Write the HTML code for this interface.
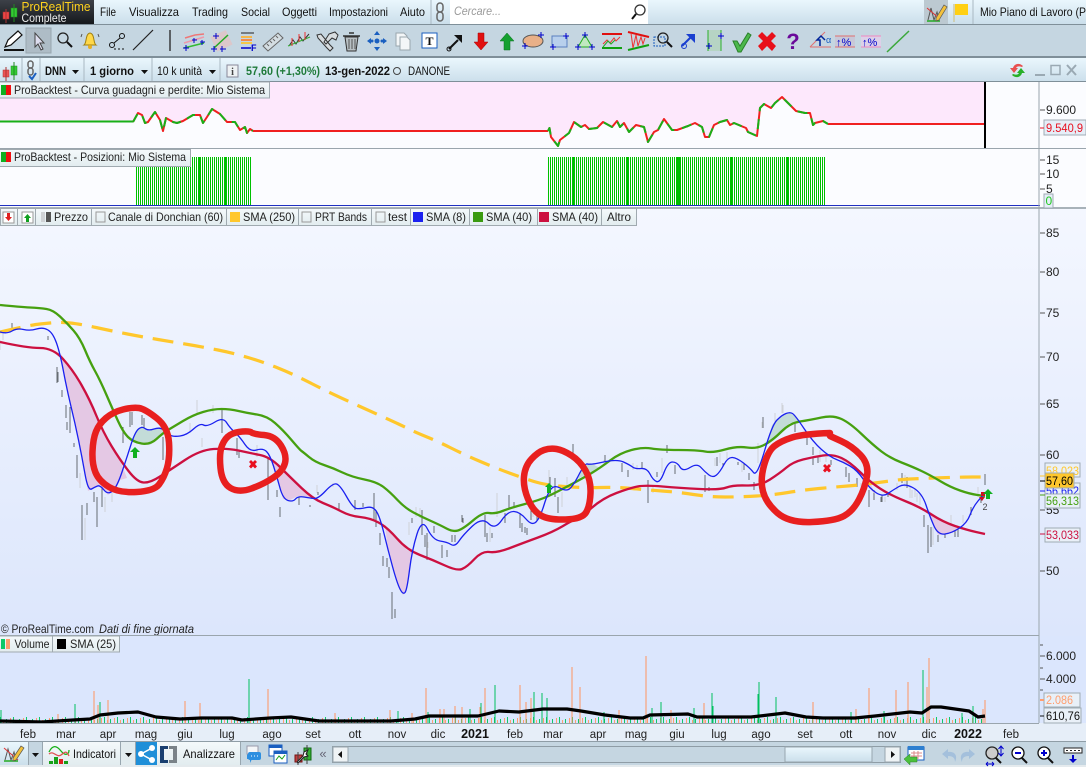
<!DOCTYPE html>
<html lang="it"><head><meta charset="utf-8"><title>ProRealTime</title>
<style>
html,body{margin:0;padding:0;background:#c5d6e1}
svg{display:block}
text{font-family:"Liberation Sans",sans-serif;font-size:12px;fill:#111}
.t{text-anchor:middle;fill:#222;font-size:11.5px}
.ax{font-size:12px;fill:#222}
.lg{font-size:12px;fill:#222}
.v{shape-rendering:crispEdges}
</style></head><body>
<svg width="1086" height="767" viewBox="0 0 1086 767" xmlns="http://www.w3.org/2000/svg">
<defs>
<linearGradient id="bar" x1="0" y1="0" x2="0" y2="1"><stop offset="0" stop-color="#eaf7fd"/><stop offset="1" stop-color="#cbdfeb"/></linearGradient>
<linearGradient id="main" x1="0" y1="0" x2="0" y2="1"><stop offset="0" stop-color="#f4f7ff"/><stop offset="1" stop-color="#dce6fc"/></linearGradient>
<linearGradient id="logo" x1="0" y1="0" x2="0" y2="1"><stop offset="0" stop-color="#3d4148"/><stop offset="1" stop-color="#15181c"/></linearGradient>
<linearGradient id="btn" x1="0" y1="0" x2="0" y2="1"><stop offset="0" stop-color="#f4f9fb"/><stop offset="1" stop-color="#e2ecef"/></linearGradient>
<pattern id="pos" width="2" height="10" patternUnits="userSpaceOnUse"><rect width="1" height="10" fill="#00c000"/></pattern>
<pattern id="vg" width="13" height="7" patternUnits="userSpaceOnUse" patternTransform="translate(0 716)"><rect x="0" y="1" width="1" height="6" fill="#10c868"/><rect x="3" y="4" width="1" height="3" fill="#ff9e6e"/><rect x="6" y="3" width="1" height="4" fill="#10c868"/><rect x="10" y="2" width="1" height="5" fill="#ff9e6e"/></pattern>
</defs>

<!-- background -->
<rect width="1086" height="767" fill="#c5d6e1"/>
<!-- menu bar -->
<rect width="1086" height="24" fill="url(#bar)"/>
<rect y="24" width="1086" height="1" fill="#7f8f99"/>
<rect width="94" height="24" fill="url(#logo)"/>
<rect x="3" y="12" width="6" height="7" fill="#e44" stroke="#a33" stroke-width=".5"/><path d="M6 9v14" stroke="#a33"/>
<rect x="11" y="8" width="6" height="9" fill="#3c3" stroke="#282" stroke-width=".5"/><path d="M14 4v18" stroke="#282"/>
<text x="21.500" y="11" style="font-size:13px;fill:#ffd21e" textLength="69" lengthAdjust="spacingAndGlyphs">ProRealTime</text>
<text x="21.500" y="22" style="font-size:12px;fill:#eee" textLength="45" lengthAdjust="spacingAndGlyphs">Complete</text>
<text x="100" y="16" textLength="16" lengthAdjust="spacingAndGlyphs">File</text><text x="129" y="16" textLength="50" lengthAdjust="spacingAndGlyphs">Visualizza</text><text x="192" y="16" textLength="36" lengthAdjust="spacingAndGlyphs">Trading</text><text x="241" y="16" textLength="29" lengthAdjust="spacingAndGlyphs">Social</text><text x="282" y="16" textLength="35" lengthAdjust="spacingAndGlyphs">Oggetti</text><text x="329" y="16" textLength="59" lengthAdjust="spacingAndGlyphs">Impostazioni</text><text x="400" y="16" textLength="25" lengthAdjust="spacingAndGlyphs">Aiuto</text>
<path d="M431 0v24" stroke="#a9b8c2"/>
<g fill="none" stroke="#666" stroke-width="1.500"><rect x="437" y="3" width="6" height="9" rx="3"/><rect x="437" y="12" width="6" height="9" rx="3"/></g>
<rect x="450" y="0" width="198" height="24" fill="#fff"/>
<text x="454" y="15" style="font-style:italic;fill:#9a9a9a;font-size:12px" textLength="47" lengthAdjust="spacingAndGlyphs">Cercare...</text>
<circle cx="640" cy="10" r="5" fill="none" stroke="#333" stroke-width="1.300"/><path d="M636 14l-4 5" stroke="#111" stroke-width="2"/>
<rect x="924" y="0" width="24" height="24" fill="#bcc9d1"/>
<path d="M928 20l3-12 3 12 3-8 2 8" fill="none" stroke="#555"/><path d="M927 8l13 11" stroke="#d33"/><path d="M927 21h13" stroke="#2a2" stroke-width="1.500"/>
<path d="M936 18l8-13 3 2-8 13-3 1z" fill="#f3c13c" stroke="#555" stroke-width=".7"/>
<path d="M954 4v18" stroke="#cfc9a0" stroke-width="1.500"/><path d="M955 4h13v11h-13z" fill="#ffd014"/>
<path d="M973 0v24" stroke="#a9b8c2"/>
<text x="980" y="16" textLength="106" lengthAdjust="spacingAndGlyphs">Mio Piano di Lavoro (P</text>

<!-- toolbar -->
<rect y="25" width="1086" height="32" fill="#c5d6e1"/>
<rect y="56" width="1086" height="2" fill="#7f8f99"/>
<rect x="26" y="28" width="25" height="25" fill="#aebcc6" stroke="#98a6af"/>
<path d="M5 47l3-7 10-9 4 4-11 10z" fill="#fff" stroke="#111" stroke-width="1.200"/><path d="M4 50h20" stroke="#111" stroke-width="2"/>
<path d="M35 33v14l3-3 3 6 2-1-3-6h4z" fill="#dde" stroke="#444"/>
<circle cx="63" cy="38" r="5" fill="none" stroke="#222" stroke-width="1.300"/><path d="M67 42l5 5" stroke="#111" stroke-width="2"/>
<path d="M84 45c3-2 1-11 6-12 5 1 3 10 6 12z" fill="#ffd84a" stroke="#a08010"/><circle cx="90" cy="47" r="2" fill="#e8b020"/><path d="M82 34l-1 3M98 34l1 3" stroke="#555"/>
<circle cx="112" cy="45" r="2.500" fill="none" stroke="#111"/><circle cx="122" cy="36" r="2.500" fill="none" stroke="#111"/><path d="M114 43l6-5" stroke="#111"/><path d="M114 49h12" stroke="#111" stroke-dasharray="2 2"/>
<path d="M133 50l20-20" stroke="#222" stroke-width="1.200"/>
<path d="M170 30v21" stroke="#222" stroke-width="1.300"/>
<g fill="none"><path d="M185 38l10-3 9-1" stroke="#e77" stroke-width="1.500"/><path d="M184 43l20-6" stroke="#e9a" stroke-width="1.500"/><path d="M184 48l20-5" stroke="#3b3" stroke-width="1.500"/><path d="M183 48h6M186 45v6M192 40h5M194 38v5M200 42h5M202 40v5" stroke="#00c"/></g>
<g fill="none"><rect x="213" y="33" width="17" height="16" fill="#e6c0c0" opacity=".7" transform="rotate(-25 221 41)"/><path d="M214 48l14-13" stroke="#2a2" stroke-width="1.500"/><path d="M213 36h6M216 33v6M211 49h6M214 46v6M220 49h6M222 46v6" stroke="#00c"/></g>
<g><path d="M241 33h13" stroke="#222"/><rect x="241" y="36" width="11" height="2" fill="#f4b64a"/><rect x="241" y="39" width="11" height="2" fill="#f48a4a"/><rect x="241" y="42" width="11" height="2" fill="#f4c84a"/><path d="M241 48h10" stroke="#00c" stroke-width="1.500"/><text x="251" y="51" style="font-size:9px;font-weight:bold;fill:#00c">F</text></g>
<path d="M263 46l15-13 5 5-15 13z" fill="#d4dde2" stroke="#666"/><path d="M267 44l2 2M270 41l2 2M273 39l2 2M276 36l2 2" stroke="#666"/>
<path d="M289 46l4-6 3 4 4-7 3 4 6-7" fill="none" stroke="#333"/><path d="M288 46l22-9" stroke="#3a3"/><path d="M292 38v8M299 34v8M305 32v8" stroke="#e33"/>
<path d="M317 35l4-1 9 11 3 3-3 3-3-3-9-10zM329 34l6-2 3 3-2 5-4-2-6 6-2-2z" fill="#d8dde0" stroke="#333"/>
<path d="M345 37h13l-2 14h-9z" fill="#b8c0c4" stroke="#333"/><path d="M343 36h17M349 33h5" stroke="#333" stroke-width="1.500"/><path d="M349 39v10M352 39v10M355 39v10" stroke="#555"/>
<g fill="#1a5fc0"><path d="M377 31l3 4h-6zM377 51l3-4h-6zM367 41l4-3v6zM387 41l-4-3v6z"/><circle cx="377" cy="41" r="2.500"/><circle cx="372" cy="41" r="1.500"/><circle cx="382" cy="41" r="1.500"/></g>
<g fill="#f3f6f8" stroke="#99a5ad"><path d="M396 33h8l3 3v10h-11z"/><path d="M400 37h7l3 3v10h-10z"/></g>
<rect x="422" y="33" width="15" height="15" fill="#fff" stroke="#1a5fc0"/><text x="429.500" y="45" style="font:bold 12px 'Liberation Serif',serif;text-anchor:middle;fill:#111">T</text>
<path d="M449 49l9-9" stroke="#111" stroke-width="2"/><circle cx="449" cy="49" r="2" fill="none" stroke="#111"/><path d="M454 35h8v8z" fill="#111"/>
<path d="M478 33h6v9h4l-7 8-7-8h4z" fill="#e01010" stroke="#a00" stroke-width=".5"/>
<path d="M504 50h6v-9h4l-7-8-7 8h4z" fill="#15a030" stroke="#0a7020" stroke-width=".5"/>
<ellipse cx="533" cy="41" rx="10" ry="6" fill="#e8b088" stroke="#555"/><path d="M538 35h6M541 32v6M522 46h6M525 43v6" stroke="#00c"/>
<rect x="552" y="36" width="15" height="11" fill="#b8d0ec" stroke="#5a80c0"/><path d="M550 47h6M553 44v6M563 36h6M566 33v6" stroke="#00c"/>
<path d="M585 35l7 12h-14z" fill="#c0e8c0" stroke="#2a2"/><path d="M582 35h6M585 32v6M575 47h6M578 44v6M589 47h6M592 44v6" stroke="#00c"/>
<path d="M602 34h20" stroke="#e01010" stroke-width="2"/><path d="M602 48h20" stroke="#10a010" stroke-width="2"/><path d="M603 44l4-4 3 3 4-5 2 3 4-4" fill="none" stroke="#e33"/><path d="M603 47l5-6 3 3 4-4" fill="none" stroke="#2a2"/>
<path d="M628 32l21 5" stroke="#e01010" stroke-width="2"/><path d="M628 50l21-5" stroke="#10a010" stroke-width="2"/><path d="M631 33l2 15 3-13 2 11 3-9 2 7 2-6" fill="none" stroke="#e33"/>
<rect x="654" y="37" width="11" height="9" fill="none" stroke="#1a5fc0" stroke-dasharray="2 1"/><circle cx="663" cy="38" r="5" fill="none" stroke="#222" stroke-width="1.300"/><path d="M667 42l5 5" stroke="#111" stroke-width="2"/>
<path d="M682 46l9-9" stroke="#1a3fd0" stroke-width="2"/><circle cx="684" cy="46" r="2.500" fill="none" stroke="#1a3fd0"/><path d="M686 34h9v9z" fill="#1a3fd0"/>
<rect x="708" y="30" width="13" height="21" fill="#b6d4c4"/><path d="M708 30v21M721 30v21" stroke="#2ab02a"/><path d="M706 46h6M709 43v6M718 36h6M721 33v6" stroke="#00c"/>
<path d="M733 41l4 0 3 5 8-13 3 2-10 17-3 0z" fill="#4cb84c" stroke="#2a802a"/>
<path d="M762 32l5 5 5-5 4 4-5 5 5 5-4 5-5-5-5 5-4-5 5-5-5-5z" fill="#e8101a"/>
<text x="793" y="49" style="font:bold 22px 'Liberation Sans',sans-serif;text-anchor:middle;fill:#6a0a9a">?</text>
<path d="M810 47l15-15M810 47h21" stroke="#e07070"/><path d="M820 46v-6h-3l4-4 4 4" fill="none" stroke="#00259a" stroke-width="1.500"/><text x="826" y="43" style="font-size:9px;fill:#1a5fc0">α</text>
<rect x="835" y="36" width="20" height="11" fill="#c8c8d8"/><path d="M835 36h20M835 47h20" stroke="#e07070"/><text x="836" y="46" style="font-size:11px;fill:#00c">↑%</text>
<rect x="861" y="36" width="20" height="11" fill="#dcd0e8"/><path d="M861 36h20M861 47h20" stroke="#f088c0"/><text x="862" y="46" style="font-size:11px;fill:#00c">↑%</text>
<path d="M887 52l22-21" stroke="#3ca83c" stroke-width="1.500"/>

<!-- instrument bar -->
<rect y="58" width="1086" height="24" fill="url(#bar)"/>
<rect y="81" width="1086" height="1" fill="#7f8f99"/>
<rect x="3" y="70" width="6" height="7" fill="#e55" stroke="#a33" stroke-width=".5"/><path d="M6 67v14" stroke="#a33"/><rect x="11" y="66" width="6" height="9" fill="#3c3" stroke="#282" stroke-width=".5"/><path d="M14 62v18" stroke="#282"/>
<path d="M22 58v23M40 58v23M84 58v23M152 58v23M220 58v23" stroke="#a9b8c2"/>
<g fill="none" stroke="#666" stroke-width="1.500"><rect x="28" y="61" width="5" height="7" rx="2.500"/><rect x="28" y="68" width="5" height="7" rx="2.500"/></g><path d="M29 76l3 3 4-6" fill="none" stroke="#1a5fc0" stroke-width="2"/>
<text x="45" y="75" style="font-weight:bold" textLength="21" lengthAdjust="spacingAndGlyphs">DNN</text><path d="M72 70h7l-3.500 4z" fill="#111"/>
<text x="90" y="75" style="font-weight:bold" textLength="44" lengthAdjust="spacingAndGlyphs">1 giorno</text><path d="M141 70h7l-3.500 4z" fill="#111"/>
<text x="157" y="75" textLength="45" lengthAdjust="spacingAndGlyphs">10 k unità</text><path d="M209 70h7l-3.500 4z" fill="#111"/>
<rect x="227" y="65" width="11" height="12" fill="#eef2f4" stroke="#889"/><text x="232.500" y="75" style="font:bold 10px 'Liberation Serif',serif;text-anchor:middle;fill:#444">i</text>
<text x="246" y="75" style="font-weight:bold;fill:#1f7a3a" textLength="74" lengthAdjust="spacingAndGlyphs">57,60 (+1,30%)</text>
<text x="325" y="75" style="font-weight:bold" textLength="65" lengthAdjust="spacingAndGlyphs">13-gen-2022</text>
<circle cx="397" cy="71" r="3.500" fill="none" stroke="#444"/>
<text x="408" y="75" textLength="42" lengthAdjust="spacingAndGlyphs">DANONE</text>
<path d="M1023 66c-4-4-9-2-10 2h-3l4 5 4-5h-2c1-2 3-2 6-1z" fill="#e85050"/><path d="M1012 75c4 4 9 2 10-2h3l-4-5-4 5h2c-1 2-3 2-6 1z" fill="#28b028"/>
<rect x="1035" y="74" width="10" height="2" fill="#9aa9b3"/><rect x="1051" y="65.500" width="9" height="9" fill="none" stroke="#9aa9b3" stroke-width="1.500"/><path d="M1067 65l9 10M1076 65l-9 10" stroke="#9aa9b3" stroke-width="2"/>

<!-- panel 1 -->
<rect y="82" width="1086" height="66" fill="#fbfcff"/>
<path d="M0 82H985V124H828L823 121L815 123L813 125L810 113L805 113L796 111L787 102L782 97L775 103L771 108L764 104L760 108L757 136L748 132L746 128L734 123L730 125L727 120L720 122L714 125L709 137L705 137L702 127L695 123L688 126L677 130L672 130L664 119L658 130L654 132L648 142L644 127L636 125L629 132L624 123L620 127L617 121L612 127L603 122L597 128L589 129L585 125L581 127L574 122L569 133L560 140L558 146L551 137L549.500 128L548 131H253L250 129L247 133L245 127L240 130L235 122L227 122L220 114L212 109L207 117L203 123L200 115L193 115L183 121L177 123L173 122L166 118L163 131L160 120L155 112L148 122L145 123L142 115L138 113L133 122H0Z" fill="#fde8fc"/>
<g fill="none" stroke-linejoin="round">
<path d="M0 121.500H133" stroke="#18b018" stroke-width="2"/>
<path d="M133 122L138 113L142 115L145 123L148 122L155 112L160 120L163 131L166 118L173 122L177 123L183 121L193 115L200 115L203 123L207 117L212 109L220 114L227 122L235 122L240 130L245 127L247 133L250 129L253 131" stroke="#f02020" stroke-width="2"/>
<path d="M133 122L138 113L142 115L145 123L148 122L155 112L160 120L163 131L166 118L173 122L177 123L183 121L193 115L200 115L203 123L207 117L212 109L220 114L227 122L235 122L240 130L245 127L247 133L250 129L253 131" stroke="#18b018" stroke-width="2" stroke-dasharray="9 7"/>
<path d="M253 131H548" stroke="#f02020" stroke-width="2"/>
<path d="M548 131L549.500 128L551 137L558 146L560 140L569 133L574 122L581 127L585 125L589 129L597 128L603 122L612 127L617 121L620 127L624 123L629 132L636 125L644 127L648 142L654 132L658 130L664 119L672 130L677 130L688 126L695 123L702 127L705 137L709 137L714 125L720 122L727 120L730 125L734 123L746 128L748 132L757 136L760 108L764 104L771 108L775 103L782 97L787 102L796 111L805 113L810 113L813 125L815 123L823 121L828 124" stroke="#f02020" stroke-width="2"/>
<path d="M548 131L549.500 128L551 137L558 146L560 140L569 133L574 122L581 127L585 125L589 129L597 128L603 122L612 127L617 121L620 127L624 123L629 132L636 125L644 127L648 142L654 132L658 130L664 119L672 130L677 130L688 126L695 123L702 127L705 137L709 137L714 125L720 122L727 120L730 125L734 123L746 128L748 132L757 136L760 108L764 104L771 108L775 103L782 97L787 102L796 111L805 113L810 113L813 125L815 123L823 121L828 124" stroke="#18b018" stroke-width="2" stroke-dasharray="10 8"/>
<path d="M828 124H985" stroke="#f02020" stroke-width="2"/>
</g>
<rect x="984" y="82" width="2" height="66" fill="#000"/>
<rect y="148" width="1086" height="1" fill="#9aa5ad"/>

<!-- panel 2 -->
<rect y="149" width="1086" height="60" fill="#fbfcff"/>
<rect x="135" y="157" width="117" height="48" fill="url(#pos)"/>
<rect x="548" y="157" width="278" height="48" fill="url(#pos)"/>
<g fill="#00c000"><rect x="198" y="157" width="3" height="48"/><rect x="224" y="157" width="2" height="48"/><rect x="573" y="157" width="2" height="48"/><rect x="626" y="157" width="3" height="48"/><rect x="677" y="157" width="3" height="48"/><rect x="730" y="157" width="2" height="48"/><rect x="786" y="157" width="2" height="48"/></g>
<rect y="205" width="1040" height="1" fill="#2030c0"/>

<!-- main chart -->
<rect y="209" width="1086" height="427" fill="url(#main)"/>
<rect y="207" width="1086" height="2" fill="#a8b2b9"/>
<path class="v" fill="none" stroke="#cfd2d8" d="M80 473V488M85 518V540M105 497V512M112 493V502M197 400V415M213 405V413M190 423V433M202 438V447M257 445V457M317 485V493M333 483V487M409 522V535M416 507V517M420 508V518M428 542V548M490 527V542M497 493V517M533 503V517M549 470V488M562 492V507M567 477V487M594 463V470M604 460V466M633 463V470M637 465V470M662 458V473M653 487V493M715 458V466M720 453V463M727 452V460M742 462V472M760 477V493M758 443V463M762 422V428M775 413V422M782 403V413M783 405V413M820 450V462M826 457V462M861 483V497M885 497V502M897 483V490M905 475V487M912 490V498M917 493V502M910 487V498M915 488V497M920 493V505M933 527V545M951 515V530M963 515V523M978 487V497M3 330V340M0 340V350"/>
<path class="v" fill="none" stroke="#666c72" d="M12 323V330M48 336V340M57 367V383M58 372V382M62 390V397M66 405V418M67 422V430M70 407V433M74 443V447M77 455V478M82 505V540M87 503V515M94 492V502M97 497V527M102 470V507M117 460V477M123 427V443M130 412V427M132 412V425M142 415V425M144 418V437M163 437V460M222 410V433M237 438V455M239 450V458M268 457V500M280 507V517M277 490V497M299 497V505M305 490V497M310 505V507M318 492V495M339 503V510M355 500V510M363 503V507M374 493V520M376 510V527M380 533V545M383 556V566M387 558V567M389 567V578M392 592V619M395 609V618M412 518V523M422 510V535M425 535V547M427 533V560M434 526V533M442 545V558M447 550V557M452 535V542M455 535V542M462 515V522M463 518V523M485 515V537M487 533V542M492 533V538M505 513V523M509 495V508M514 502V508M520 513V528M522 523V532M525 527V533M527 528V535M531 502V520M537 510V520M550 477V495M555 478V497M558 497V513M573 444V460M605 455V462M622 463V472M628 470V477M642 462V468M648 480V503M657 472V477M667 445V453M675 465V474M705 475V492M709 487V491M717 457V466M723 463V467M738 462V465M744 463V470M749 473V480M754 482V490M763 417V428M791 416V420M795 423V432M807 438V445M813 447V455M813 457V465M818 457V463M831 460V465M846 467V477M849 473V482M857 478V487M869 490V507M874 490V500M881 497V502M882 495V502M888 492V497M902 473V483M907 477V488M924 515V527M928 525V553M931 527V547M938 535V542M945 533V538M955 530V537M958 528V537M971 507V515M981 495V503M985 474V485"/>
<g fill="#e4c8e4">
<path d="M60 353L73 370L90 400L103 432L120 460L127 478L120 480L117 487L108 495L100 485L95 487L88 491L82 457L75 423L67 390Z"/>
<path d="M271 458L290 477L313 499L310 498L298 496L290 500L283 499L277 477Z"/>
<path d="M385 525L390 530L407 550L412 552L407 590L403 595L397 583L388 550Z"/>
<path d="M928 510L943 522L960 528L952 533L938 535L930 517Z"/>
<path d="M833 454L850 462L870 482L875 494L870 489L857 470L843 462Z"/>
</g>
<g fill="#c3dcd8">
<path d="M135 432L142 426L148 431L160 427L166 430L150 445L140 444L133 442Z"/>
<path d="M767 445L772 425L782 415L790 412L795 415L801 422L790 423L773 440Z"/>
<path d="M575 480L585 465L590 463L600 468Z"/>
</g>
<g fill="none" stroke-linejoin="round" stroke-linecap="butt">
<path class="s" d="M0 332L30 325L50 323L60 322L80 324L112 331L143 337L173 342L203 347L233 353L263 362L293 374L330 393L390 420L407 428L417 433L437 441L463 454L493 467L523 478L545 485L583 488L617 487L647 490L677 492L710 497L740 497L773 495L803 490L835 487L860 485L897 480L907 479L960 477L985 477" stroke="#ffc72c" stroke-width="3.200" stroke-dasharray="21 10"/>
<path class="s" d="M0 342L27 348L53 348L73 370L90 400L103 432L120 460L137 482L150 483L170 470L200 450L227 448L250 453L270 457L290 477L313 499L333 507L350 516L370 518L387 527L407 550L433 560L457 571L467 567L482 551L497 553L523 543L553 532L573 520L580 518L603 498L630 488L645 485L680 488L720 490L733 485L760 486L780 473L793 462L813 457L833 454L850 462L870 482L890 495L920 507L943 522L967 530L985 534" stroke="#cc1040" stroke-width="2.300"/>
<path class="s" d="M0 305L20 307L40 308L53 310L67 323L80 338L90 362L100 380L113 410L123 432L133 442L150 445L163 433L173 427L193 415L213 409L230 409L247 413L267 416L283 430L300 450L303 452L315 462L333 468L352 477L377 482L390 492L405 508L422 517L440 525L453 532L463 529L483 512L495 514L510 508L540 500L557 492L585 477L600 468L620 453L643 447L660 450L697 450L713 453L737 446L757 449L773 440L790 423L810 420L833 415L850 423L873 445L890 458L913 467L930 475L950 487L970 494L985 496" stroke="#46a010" stroke-width="2.300"/>
<path class="s" d="M0 332L7 334L17 328L30 331L43 327L53 333L60 353L67 390L75 423L82 457L88 491L95 487L100 485L108 495L117 487L127 457L135 432L142 426L148 431L160 427L167 433L173 437L187 435L200 423L207 427L223 417L230 428L240 437L250 452L263 448L270 455L277 477L283 499L293 502L298 496L310 498L318 499L333 483L340 485L353 508L360 509L373 506L380 517L388 550L397 583L403 595L407 590L412 550L422 518L433 540L447 542L455 547L463 535L482 517L495 530L508 511L520 512L532 526L540 518L548 492L555 485L565 491L572 488L585 463L590 465L617 459L630 465L635 469L647 468L653 480L660 483L668 462L677 462L683 472L697 463L705 472L713 478L720 472L728 457L737 458L750 468L757 477L772 425L782 415L790 412L795 415L813 442L830 457L843 462L857 470L870 489L883 497L893 490L905 483L922 493L930 517L938 535L952 533L967 523L973 507L983 495L988 491" stroke="#1a20f0" stroke-width="1.300"/>
<g stroke="#e81f1f" stroke-width="6.500" stroke-linejoin="round" stroke-linecap="round">
<path class="s" d="M99 424L113 412L133 407L145 409L168 427L170 458L164 478L154 491L119 493L99 481L92 464L93 439Z"/>
<path class="s" d="M235 432L250 431L253 434L275 436L287 455L283 471L264 484L239 493L222 483L219 453L225 438Z"/>
<path class="s" d="M525 466L538 452L550 448L563 450L580 461L591 480L590 506L582 519L549 520L533 511L523 487Z"/>
<path class="s" d="M830 433L803 434L781 441L768 451L760 480L766 503L789 523L835 521L853 511L865 488L869 464L852 446L830 436"/>
</g>
</g>
<path d="M135 447l5 5h-3v6h-4v-6h-3z" fill="#10b020"/>
<path d="M252 460l2 2 2-2 2 2-2 2 2 2.500-2 2-2-2-2 2-2-2 2-2.500-2-2 2-2z" fill="#e81020" transform="translate(-1 0)"/>
<path d="M827 464l2 2 2-2 2 2-2 2 2 2.500-2 2-2-2-2 2-2-2 2-2.500-2-2 2-2z" fill="#e81020" transform="translate(-2 0)"/>
<path d="M549 483l4 4h-2v6h-4v-6h-2z" fill="#10b020"/>
<rect x="981" y="492" width="4" height="4" fill="#d01020"/><path d="M979 497h6l-3 4z" fill="#d01020"/>
<path d="M988 489l5 5h-3v5h-4v-5h-3z" fill="#10b020"/>
<text x="985" y="510" style="font-size:9px;text-anchor:middle;fill:#444">2</text>
<text x="1" y="633" style="fill:#222" textLength="93" lengthAdjust="spacingAndGlyphs">© ProRealTime.com</text>
<text x="99" y="633" style="font-style:italic;fill:#222" textLength="95" lengthAdjust="spacingAndGlyphs">Dati di fine giornata</text>

<!-- volume -->
<rect y="636" width="1086" height="87" fill="#dbe6fd"/>
<rect y="635" width="1039" height="1" fill="#9aa5ad"/>
<rect class="v" y="716" x="0" width="985" height="7" fill="url(#vg)"/>
<path class="v" fill="none" stroke="#ff9460" d="M94 691V723M98 705V723M108 700V723M58 714V723M185 701V723M200 703V723M268 689V723M426 688V723M390 710V723M335 713V723M485 688V723M520 685V723M455 706V723M440 709V723M444 709V723M412 713V723M462 707V723M480 707V723M526 702V723M531 698V723M572 667V723M580 687V723M646 656V723M704 703V723M813 702V723M869 688V723M896 690V723M908 682V723M929 658V723M927 687V723M985 700V723M983 709V723M856 709V723M671 710V723M619 710V723"/>
<path class="v" fill="none" stroke="#00c060" d="M249 679V723M75 704V723M100 702V723M495 685V723M481 703V723M398 711V723M428 712V723M542 693V723M534 692V723M470 709V723M1 710V723M547 698V723M759 682V723M758 694V723M776 697V723M661 702V723M712 693V723M713 706V723M694 708V723M652 708V723M923 670V723M973 706V723M962 713V723M851 712V723M884 711V723M604 712V723"/>
<path fill="none" stroke="#000" stroke-width="3.200" stroke-linejoin="round" d="M0 721L42 722L73 720L90 719L100 715L118 713L138 712L156 717L180 719L201 718L232 718L242 720L270 718L291 717L305 719L319 721L391 721L415 719L429 716L478 716L499 711L519 712L543 709L567 709L581 711L605 715L630 718L643 718L650 715L688 714L697 717L751 717L785 713L806 717L823 718L855 718L875 716L910 712L922 713L931 707L941 707L969 711L978 717L985 716"/>

<!-- time axis -->
<rect y="723" width="1086" height="19" fill="#e6eef8"/>
<rect y="723" width="1039" height="1" fill="#9aa5ad"/>
<g>
<text class="t" x="28" y="738">feb</text><text class="t" x="66" y="738">mar</text><text class="t" x="108" y="738">apr</text><text class="t" x="146" y="738">mag</text><text class="t" x="185" y="738">giu</text><text class="t" x="227" y="738">lug</text><text class="t" x="272" y="738">ago</text><text class="t" x="313" y="738">set</text><text class="t" x="355" y="738">ott</text><text class="t" x="397" y="738">nov</text><text class="t" x="438" y="738">dic</text>
<text class="t" x="475" y="738" style="font-weight:bold;font-size:12.500px;fill:#111">2021</text>
<text class="t" x="515" y="738">feb</text><text class="t" x="553" y="738">mar</text><text class="t" x="598" y="738">apr</text><text class="t" x="636" y="738">mag</text><text class="t" x="677" y="738">giu</text><text class="t" x="719" y="738">lug</text><text class="t" x="761" y="738">ago</text><text class="t" x="805" y="738">set</text><text class="t" x="846" y="738">ott</text><text class="t" x="887" y="738">nov</text><text class="t" x="929" y="738">dic</text>
<text class="t" x="968" y="738" style="font-weight:bold;font-size:12.500px;fill:#111">2022</text>
<text class="t" x="1011" y="738">feb</text>
</g>
<path d="M1039 82V723" stroke="#9aa5ad"/>
<rect y="741" width="1086" height="1" fill="#8f9da6"/>

<!-- right axis labels -->
<g>
<path d="M1040 110h5M1040 233h5M1040 272h5M1040 313h5M1040 357h5M1040 404h5M1040 455h5M1040 510h5M1040 571h5M1040 160h5M1040 174h5M1040 189h5M1040 656h5M1040 679h5M1040 645h3M1040 668h3M1040 690h3" stroke="#555"/>
<text class="ax" x="1046" y="114">9.600</text>
<text class="ax" x="1046" y="164">15</text><text class="ax" x="1046" y="178">10</text><text class="ax" x="1046" y="193">5</text>
<text class="ax" x="1046" y="237">85</text><text class="ax" x="1046" y="276">80</text><text class="ax" x="1046" y="317">75</text><text class="ax" x="1046" y="361">70</text><text class="ax" x="1046" y="408">65</text><text class="ax" x="1046" y="459">60</text><text class="ax" x="1046" y="514">55</text><text class="ax" x="1046" y="575">50</text>
<text class="ax" x="1046" y="660">6.000</text><text class="ax" x="1046" y="683">4.000</text>
<rect x="1044" y="120" width="42" height="15" fill="#e6eef8" stroke="#a0acb4"/><text x="1046" y="132" style="fill:#e81020" textLength="37" lengthAdjust="spacingAndGlyphs">9.540,9</text><path d="M1040 128h4" stroke="#e81020"/>
<rect x="1044" y="194" width="9" height="14" fill="#e6eef8" stroke="#a0acb4"/><text x="1045.500" y="205" style="fill:#22c822">0</text>
<rect x="1045" y="463" width="35" height="14" fill="#e9f0f8" stroke="#a0acb4"/><text x="1046" y="475" style="fill:#ffc72c" textLength="33" lengthAdjust="spacingAndGlyphs">58,023</text><path d="M1040 476h5" stroke="#ffc72c"/>
<rect x="1045" y="483" width="35" height="14" fill="#e9f0f8" stroke="#a0acb4"/><text x="1046" y="495" style="fill:#1a20f0" textLength="33" lengthAdjust="spacingAndGlyphs">56,662</text><path d="M1040 491h5" stroke="#1a20f0"/>
<rect x="1045" y="494" width="35" height="14" fill="#e9f0f8" stroke="#a0acb4"/><text x="1046" y="505" style="fill:#46a010" textLength="33" lengthAdjust="spacingAndGlyphs">56,313</text><path d="M1040 495h5" stroke="#46a010"/>
<rect x="1045" y="473" width="29" height="15" fill="#ffc72c" stroke="#a0acb4"/><text x="1046" y="485" style="fill:#000" textLength="27" lengthAdjust="spacingAndGlyphs">57,60</text><path d="M1040 481h5" stroke="#000"/>
<rect x="1045" y="528" width="35" height="14" fill="#e9f0f8" stroke="#a0acb4"/><text x="1046" y="539" style="fill:#cc1040" textLength="33" lengthAdjust="spacingAndGlyphs">53,033</text><path d="M1040 534h5" stroke="#cc1040"/>
<rect x="1044" y="693" width="36" height="14" fill="#e9f0f8" stroke="#a0acb4"/><text x="1046" y="704" style="fill:#ff9e6e" textLength="27" lengthAdjust="spacingAndGlyphs">2.086</text><path d="M1040 700h4" stroke="#ff9e6e" stroke-width="2"/>
<rect x="1044" y="708" width="37" height="15" fill="#e9f0f8" stroke="#a0acb4"/><text x="1046" y="720" style="fill:#111" textLength="34" lengthAdjust="spacingAndGlyphs">610,76</text><path d="M1040 716h4" stroke="#111"/>
</g>

<!-- legends -->
<g stroke="#a0aab0" fill="url(#btn)">
<rect x="-1" y="82" width="270.500" height="16"/>
<rect x="-1" y="149.500" width="191.500" height="17"/>
<rect x="0.500" y="208.500" width="17" height="17"/><rect x="17.500" y="208.500" width="18" height="17"/><rect x="35.500" y="208.500" width="56" height="17"/><rect x="91.500" y="208.500" width="135" height="17"/><rect x="226.500" y="208.500" width="72" height="17"/><rect x="298.500" y="208.500" width="73" height="17"/><rect x="371.500" y="208.500" width="39" height="17"/><rect x="410.500" y="208.500" width="59" height="17"/><rect x="469.500" y="208.500" width="68" height="17"/><rect x="537.500" y="208.500" width="64" height="17"/><rect x="601.500" y="208.500" width="35" height="17"/>
<rect x="-1" y="636" width="53.500" height="16"/><rect x="52.500" y="636" width="67" height="16"/>
</g>
<rect x="1" y="85" width="5" height="10" fill="#10b020"/><rect x="6" y="85" width="5" height="10" fill="#f01010"/>
<text class="lg" x="14" y="94" textLength="251" lengthAdjust="spacingAndGlyphs">ProBacktest - Curva guadagni e perdite: Mio Sistema</text>
<rect x="1" y="152" width="5" height="10" fill="#10b020"/><rect x="6" y="152" width="5" height="10" fill="#f01010"/>
<text class="lg" x="14" y="161" textLength="172" lengthAdjust="spacingAndGlyphs">ProBacktest - Posizioni: Mio Sistema</text>
<rect x="3" y="212" width="11" height="11" fill="#fff" stroke="#999"/><path d="M7 213h3v4h2l-3.500 4-3.500-4h2z" fill="#e02020"/>
<rect x="22" y="212" width="11" height="11" fill="#fff" stroke="#999"/><path d="M26 222h3v-4h2l-3.500-4-3.500 4h2z" fill="#10a020"/>
<rect x="41" y="212" width="4" height="10" fill="#cfd2d5"/><rect x="46" y="212" width="5" height="10" fill="#555"/>
<text class="lg" x="54" y="221" textLength="34" lengthAdjust="spacingAndGlyphs">Prezzo</text>
<rect x="96" y="212" width="9" height="10" fill="none" stroke="#999"/><text class="lg" x="108" y="221" textLength="115" lengthAdjust="spacingAndGlyphs">Canale di Donchian (60)</text>
<rect x="230" y="212" width="10" height="10" fill="#ffc72c"/><text class="lg" x="243" y="221" textLength="52" lengthAdjust="spacingAndGlyphs">SMA (250)</text>
<rect x="302" y="212" width="9" height="10" fill="none" stroke="#999"/><text class="lg" x="315" y="221" textLength="52" lengthAdjust="spacingAndGlyphs">PRT Bands</text>
<rect x="376" y="212" width="9" height="10" fill="none" stroke="#999"/><text class="lg" x="388" y="221" textLength="19" lengthAdjust="spacingAndGlyphs">test</text>
<rect x="413" y="212" width="10" height="10" fill="#1a20f0"/><text class="lg" x="426" y="221" textLength="40" lengthAdjust="spacingAndGlyphs">SMA (8)</text>
<rect x="473" y="212" width="10" height="10" fill="#3a9a10"/><text class="lg" x="486" y="221" textLength="46" lengthAdjust="spacingAndGlyphs">SMA (40)</text>
<rect x="539" y="212" width="10" height="10" fill="#cc1040"/><text class="lg" x="552" y="221" textLength="46" lengthAdjust="spacingAndGlyphs">SMA (40)</text>
<text class="lg" x="607" y="221" textLength="24" lengthAdjust="spacingAndGlyphs">Altro</text>
<rect x="1" y="639" width="4" height="10" fill="#10c868"/><rect x="6" y="639" width="4" height="10" fill="#ff9e6e"/>
<text class="lg" x="14.500" y="648" textLength="35" lengthAdjust="spacingAndGlyphs">Volume</text>
<rect x="57" y="639" width="9" height="10" fill="#000"/><text class="lg" x="70" y="648" textLength="46" lengthAdjust="spacingAndGlyphs">SMA (25)</text>

<!-- bottom toolbar -->
<rect y="742" width="1086" height="25" fill="#c5d6e1"/>
<rect y="765" width="1086" height="2" fill="#e4eaed"/>
<rect y="742" width="28" height="23" fill="url(#bar)"/>
<path d="M5 760l3-11 3 11 3-8 2 8" fill="none" stroke="#555"/><path d="M4 748l14 12" stroke="#d33"/><path d="M4 761h14" stroke="#2a2" stroke-width="1.500"/><path d="M13 758l8-12 3 2-8 12-3 1z" fill="#f3c13c" stroke="#555" stroke-width=".7"/>
<path d="M28.500 742v23M42.500 742v23" stroke="#98a6af"/>
<path d="M32 753h7l-3.500 4z" fill="#111"/>
<rect x="43" y="742" width="92" height="23" fill="url(#btn)"/>
<path d="M49 752c4-8 8-6 12-1s8 4 8-1" fill="none" stroke="#18b018" stroke-width="1.300"/><path d="M49 754c4-4 8 4 12 1s5-5 8 1" fill="none" stroke="#e05050" stroke-width="1.300"/>
<rect x="49" y="761" width="4" height="3" fill="#18a018"/><rect x="54" y="757" width="4" height="7" fill="#18a018"/><rect x="59" y="759" width="4" height="5" fill="#e02020"/><rect x="64" y="761" width="4" height="3" fill="#18a018"/>
<text x="73" y="758" textLength="43" lengthAdjust="spacingAndGlyphs">Indicatori</text>
<path d="M120.500 742v23M135.500 742v23" stroke="#98a6af"/>
<rect x="121" y="742" width="14" height="23" fill="#e2ecef"/><path d="M125 753h7l-3.500 4z" fill="#111"/>
<rect x="136" y="742" width="21" height="23" fill="#1f8fd8"/>
<g fill="#fff"><circle cx="141" cy="754" r="3"/><circle cx="152" cy="748" r="3"/><circle cx="152" cy="760" r="3"/></g><path d="M141 754l11-6M141 754l11 6" stroke="#fff" stroke-width="1.500"/>
<rect x="157" y="742" width="83" height="23" fill="url(#btn)"/>
<path d="M168 746h-8v17h8v-3h-4v-11h4z" fill="#1a3f70"/><path d="M169 746h8v17h-8v-3h4v-11h-4z" fill="#7a8288"/>
<text x="183" y="758" textLength="52" lengthAdjust="spacingAndGlyphs">Analizzare</text>
<path d="M240.500 742v23" stroke="#98a6af"/>
<path d="M247 746h8l3 3v10h-6l-2 4v-4h-3z" fill="#2d8fe0"/><rect x="247" y="746" width="11" height="8" fill="#f4f6f8" stroke="#99a"/><rect x="248" y="752" width="13" height="8" rx="2" fill="#2d8fe0"/><path d="M251 756h1M254 756h1M257 756h1" stroke="#fff"/>
<rect x="269" y="745" width="13" height="11" fill="#fff" stroke="#1a5fc0"/><rect x="269" y="745" width="13" height="3" fill="#1a5fc0"/><rect x="274" y="751" width="13" height="12" fill="#fff" stroke="#1a5fc0"/><rect x="274" y="751" width="13" height="3" fill="#1a5fc0"/><path d="M276 760l3-4 3 3 3-4" fill="none" stroke="#18a018"/>
<rect x="295" y="755" width="7" height="7" fill="#c04040" stroke="#711"/><rect x="304" y="748" width="7" height="12" fill="#30b030" stroke="#161"/><path d="M298 752v13M307 745v19" stroke="#444"/><path d="M297 762l6-6 1-4 4-2-2 4 2 2-4 1-6 6z" fill="#fff" stroke="#222"/>
<text x="323" y="758" style="font-size:13px;text-anchor:middle;fill:#667">«</text>
<rect x="332.500" y="746.500" width="568" height="16" fill="#c5d6e1" stroke="#8f9da6"/>
<rect x="333" y="747" width="15" height="15" fill="#eef3f5" stroke="#98a6af"/><path d="M342 751v7l-4-3.500z" fill="#111"/>
<rect x="785" y="747" width="87" height="15" fill="url(#bar)" stroke="#98a6af"/>
<rect x="885" y="747" width="15" height="15" fill="#eef3f5" stroke="#98a6af"/><path d="M891 751v7l4-3.500z" fill="#111"/>
<rect x="908" y="747" width="16" height="13" fill="#fff" stroke="#1a5fc0"/><rect x="908" y="746" width="16" height="4" fill="#2d7fd0"/><path d="M911 753h11M911 756h11M914 751v8M918 751v8" stroke="#d88"/><path d="M904 759l6-5v3h7v5h-7v3z" fill="#4cc03c" stroke="#2a802a" stroke-width=".5"/>
<path d="M951 748l-6 5 6 5v-3c5 0 7 2 7 6 3-6 0-11-7-10z" fill="#a4c0dc" transform="translate(-3 1)"/>
<path d="M968 748l6 5-6 5v-3c-5 0-7 2-7 6-3-6 0-11 7-10z" fill="#a4c0dc" transform="translate(1 1)"/>
<circle cx="992" cy="753" r="6" fill="#ccc" stroke="#222" stroke-width="1.300"/><path d="M996 758l5 5" stroke="#111" stroke-width="2"/><path d="M1001 746v10M998.500 749l2.500-3 2.500 3M998.500 753l2.500 3 2.500-3M986 764h8M986 764l2-2M986 764l2 2M994 764l-2-2M994 764l-2 2" stroke="#00c" fill="none"/>
<circle cx="1018" cy="753" r="6" fill="#fff" stroke="#111" stroke-width="1.300"/><path d="M1015 753h6" stroke="#00c" stroke-width="2"/><path d="M1022 758l5 5" stroke="#111" stroke-width="2"/>
<circle cx="1044" cy="753" r="6" fill="#fff" stroke="#111" stroke-width="1.300"/><path d="M1041 753h6M1044 750v6" stroke="#00c" stroke-width="2"/><path d="M1048 758l5 5" stroke="#111" stroke-width="2"/>
<rect x="1064" y="748" width="18" height="5" fill="#fff" stroke="#222"/><path d="M1066 750.500h2M1070 750.500h2M1074 750.500h2M1078 750.500h2" stroke="#222"/><path d="M1073 755v5" stroke="#00c" stroke-width="2"/><path d="M1069 759h8l-4 4z" fill="#00c"/>
</svg>
<script>
document.querySelectorAll('path.s').forEach(function(p){
  var n=p.getAttribute('d').match(/-?[\d.]+/g).map(Number),a=[],i,o;
  for(i=0;i+1<n.length;i+=2)a.push([n[i],n[i+1]]);
  function m(u,v){return [(u[0]+v[0])/2,(u[1]+v[1])/2]}
  var z=/Z\s*$/.test(p.getAttribute('d')),l=a.length;
  if(z){o='M'+m(a[l-1],a[0]);for(i=0;i<l;i++)o+='Q'+a[i]+' '+m(a[i],a[(i+1)%l]);o+='Z'}
  else{o='M'+a[0];for(i=1;i<l-1;i++)o+='Q'+a[i]+' '+m(a[i],a[i+1]);o+='L'+a[l-1]}
  p.setAttribute('d',o);
});
</script>
</body></html>
